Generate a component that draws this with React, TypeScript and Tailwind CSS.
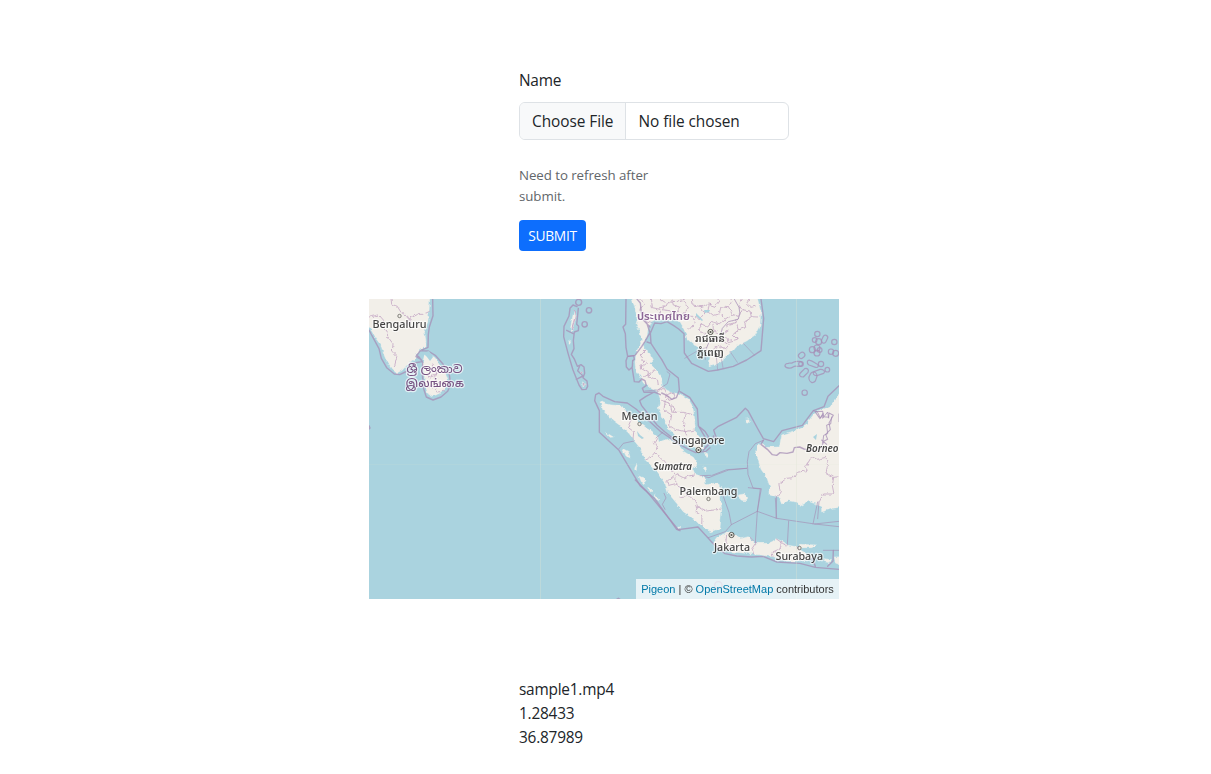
import React from "react";

const LAND = "#f2efe9";
const BORDER = "#a58db5";

type LabelProps = {
  x: number;
  y: number;
  width: number;
  children: string;
  size?: number;
  fill?: string;
  italic?: boolean;
  weight?: number;
};

function Label({ x, y, width, children, size = 11, fill = "#444444", italic, weight = 500 }: LabelProps) {
  return (
    <text
      x={x}
      y={y}
      textLength={width}
      lengthAdjust="spacingAndGlyphs"
      fontSize={size}
      fontWeight={weight}
      fontStyle={italic ? "italic" : "normal"}
      fill={fill}
      stroke="#ffffff"
      strokeOpacity={0.65}
      strokeWidth={2.4}
      strokeLinejoin="round"
      paintOrder="stroke"
    >
      {children}
    </text>
  );
}

function Town({ x, y, capital }: { x: number; y: number; capital?: boolean }) {
  return (
    <g>
      <circle cx={x} cy={y} r={capital ? 2.6 : 1.7} fill="#f2efe9" stroke="#55554f" strokeWidth={capital ? 1 : 0.7} />
      {capital && <circle cx={x} cy={y} r={1.1} fill="#55554f" />}
    </g>
  );
}

function MapDrawing() {
  return (
    <svg
      className="block h-[300px] w-[470px]"
      viewBox="369 299 470 300"
      fontFamily="'Noto Sans', 'Noto Sans Thai', 'Noto Sans Khmer', 'Noto Sans Sinhala', 'Noto Sans Tamil', sans-serif"
    >
      <defs>
        <filter id="coast" x="369" y="299" width="470" height="300" filterUnits="userSpaceOnUse" colorInterpolationFilters="sRGB">
          <feTurbulence type="fractalNoise" baseFrequency="0.22" numOctaves="2" seed="4" result="n" />
          <feDisplacementMap in="SourceGraphic" in2="n" scale="4" xChannelSelector="R" yChannelSelector="G" />
        </filter>
      </defs>
      <rect x="369" y="299" width="470" height="300" fill="#aad3df" />

      <g filter="url(#coast)" fill={LAND} stroke="#c6e1e7" strokeWidth="3" strokeLinejoin="round" paintOrder="stroke">
        {/* India and Sri Lanka */}
        <g transform="translate(365 295) scale(.33333)">
          <path d="M0 0H195L192 50L188 85L178 110L183 138L180 155L158 172L150 190L128 208L112 226L95 234L80 222L66 200L55 175L48 150L32 130L20 108L0 85Z" />
          <path d="M178 183L192 177L210 188L222 208L240 232L250 260L243 280L225 296L203 303L188 295L180 270L177 232L172 205Z" />
        </g>
        {/* Andaman and Nicobar, mainland */}
        <g transform="translate(525 295) scale(.33333)">
          <path d="M148 45L153 65L146 90L139 112L137 94L143 65ZM130 137L137 140L134 148L129 145ZM166 228L173 234L168 241ZM173 260L180 269L174 276Z" />
          <path d="M318 0L330 40L337 70L333 90L345 110L350 140L337 165L330 200L332 225L346 245L356 262L378 278L398 290L406 312L400 340L410 365L425 392L450 420L485 450L515 462L535 462L530 435L512 412L508 365L503 335L490 312L465 297L440 292L425 285L412 272L409 250L394 226L374 205L385 194L374 175L362 165L354 150L366 125L370 98L378 80L400 72L430 74L452 72L466 85L478 105L487 132L507 150L535 163L556 176L552 215L572 209L597 192L617 172L635 152L665 138L690 120L705 90L707 50L695 0Z" />
        </g>
        {/* Sumatra */}
        <g transform="translate(560 380) scale(.33333)">
          <path d="M120 65L148 74L180 77L202 93L220 113L240 130L268 150L293 170L297 186L320 178L350 190L372 215L400 232L412 250L400 270L405 283L434 290L437 315L470 308L485 320L482 350L485 390L480 445L452 455L425 440L400 415L370 395L350 370L325 340L315 310L300 290L282 265L256 240L245 210L225 185L207 160L185 140L158 120L130 93Z" />
          <path d="M137 157L160 171L150 172ZM187 205L205 215L211 234L198 228ZM237 288L252 295L258 312L244 305ZM266 324L277 333L271 336ZM284 343L298 362L289 358ZM232 250L228 273L224 265ZM432 215L444 222L438 230ZM535 345L552 342L563 352L557 362L543 360ZM555 118L567 116L568 130L558 127ZM430 265L438 258L440 275Z" />
        </g>
        {/* Borneo */}
        <g transform="translate(700 380) scale(.33333)">
          <path d="M172 194L188 187L195 202L238 201L245 165L290 150L314 138L342 102L370 88L395 76L435 20V378L400 385L365 396L365 382L350 373L325 364L300 379L288 366L265 362L245 372L238 355L210 345L210 320L200 292L183 268L176 245L167 215Z" />
        </g>
        {/* Java and islands to its east */}
        <g transform="translate(630 480) scale(.33333)">
          <path d="M248 192L267 168L290 158L310 158L332 176L355 170L370 190L420 190L438 176L460 185L475 196L500 200L525 215L545 229L535 241L500 243L470 243L430 230L370 222L310 216L268 208ZM508 193L560 195L545 203L510 203ZM582 236L605 239L596 254ZM612 231L640 230V258L616 249ZM145 137L153 140L148 143Z" />
        </g>
      </g>

      <g filter="url(#coast)" fill="none" stroke="#c5a9c6" strokeWidth="2.8" strokeLinejoin="round" strokeOpacity=".9">
        <g transform="translate(365 295) scale(.33333)">
          <path d="M78 10L80 28L97 34L108 52L128 64L133 75L130 90M133 71L158 58L175 58L194 49M12 66L42 60L56 76L50 94L66 108L68 125L84 146L82 170L96 185L88 216" />
          <path d="M205 204L198 224L216 232L207 250L222 264L242 266M187 280L203 272L218 291L241 288M182 239L197 246L211 240L220 216" />
        </g>
        <g transform="translate(525 295) scale(.33333)">
          <path d="M148 45L151 65L145 85L139 105M168 230L171 238M175 264L177 272" strokeWidth="4" />
          <path d="M360 165L344 181L360 201L344 215L370 230L368 246L397 252L400 270M345 220L365 205M370 245L388 226M356 247L378 233" />
          <path d="M344 12L358 28L344 43L365 60L356 75L379 82M379 12L382 38L405 43L401 64M405 12L425 25L412 44L440 48L438 67M440 12L445 30L467 36L453 55L472 66M401 39L420 35L435 18L455 20L480 12" />
          <path d="M473 12L490 38L475 59L500 64L510 83L493 103M502 12L504 30L528 35L540 54L525 70L510 68M528 35L549 27L570 34L582 17L573 5M553 28L548 50L565 64L585 58L601 72L583 86L561 80L548 96L532 88L520 104L540 116L530 133M601 72L622 58L640 64L633 82L605 90L609 106L590 119L565 107L564 86M640 64L651 44L675 48L679 65L699 66M651 44L640 28L649 12M679 65L658 78L662 97L640 105L633 82M640 105L623 119L637 133L610 140L602 126L580 138L569 124M595 135L614 150L602 164L583 151L565 162M674 12L665 25L677 37L695 33M582 58L588 36L610 38L621 18L613 4M610 38L622 58" />
          <path d="M395 291L418 280L427 299L446 291L451 310L432 316L423 300M409 316L435 325L450 342L443 352L477 352L507 360M423 299L417 345L440 360L434 392L450 403L480 410L510 405M441 353L436 325M480 355L475 397L485 421" />
        </g>
        <g transform="translate(560 380) scale(.33333)">
          <path d="M202 93L213 119L204 142L221 155L219 181M293 170L283 188L293 207L274 230L258 238M284 218L309 241L320 254L343 280L370 293L404 284M343 286L321 304L326 316L347 311L367 326L382 346L405 360L413 380L440 393L485 387M348 290L347 311M382 346L359 351M413 380L408 397L426 407L425 440" />
        </g>
        <g transform="translate(700 380) scale(.33333)">
          <path d="M335 230L317 260L325 271L291 277L281 293L259 295L236 314L241 335L230 352M335 230L351 238L378 232L383 256L378 279L401 292L397 317L402 342L368 342L357 365M401 292L418 290" />
        </g>
        <g transform="translate(630 480) scale(.33333)">
          <path d="M290 162L288 185L299 205L299 216M360 171L377 189L366 206L371 222M438 176L454 187L446 208L426 217L429 230M454 187L470 198M501 199L508 215" />
        </g>
      </g>

      <g fill="none" stroke={BORDER} strokeWidth="4.2" strokeLinejoin="round" strokeLinecap="round" strokeOpacity=".75">
        {/* Maritime limits around India and Sri Lanka */}
        <g transform="translate(365 295) scale(.33333)">
          <path d="M203 12L204 62L193 96L190 118L189 157L175 163L166 167L153 185L168 193L172 200L146 204L139 218L121 231L104 239L88 237L65 218L49 190L42 161L27 133L12 105M166 167L190 168L212 182L234 207L253 239L257 269L248 289L228 306L204 315L184 306L176 281L172 237L173 202L162 186L155 180M12 392L15 399L12 402" />
        </g>
        {/* Island chain and west coast of the peninsula */}
        <g transform="translate(525 295) scale(.33333)">
          <path d="M156 35L144 30L135 40L132 63L117 94L116 125L122 148L130 178L144 225L162 270L171 284L183 283L188 274L186 258L174 248L179 235L177 216L168 209L157 214L148 192L139 178L147 161L145 137L148 111L160 107L161 94L155 88L158 60L160 40M145 116L125 106M164 213L158 227L174 243L154 253" />
          <circle cx="161" cy="22" r="9" />
          <circle cx="192" cy="46" r="8" />
          <circle cx="179" cy="88" r="8" />
          <path d="M303 12L302 88L294 96L301 116L303 157L308 184L303 197L304 216L312 225L322 216L323 197L328 193L326 182L309 184M321 216L328 260L342 261L350 252L360 257L364 271L352 280L357 292L388 291L363 304L344 317L350 332L396 390L420 411L460 443M388 291L406 299" />
          <path d="M336 12L346 24L350 60L366 86L375 113L360 139L350 155L330 181L310 184M355 75L375 96M366 141L378 145L392 167L410 193L426 222L460 249L463 285L454 308L440 313L427 302L410 294M378 145L376 115L389 84L408 86L426 80L445 91L461 102L477 116L478 174L500 205L550 229L578 225L625 214L665 195L708 167L716 70L708 12" />
          <path d="M426 230L435 237L427 266L398 285L360 288" strokeWidth="2.4" />
          <path d="M479 190L527 162L545 158L541 194M587 180L594 218M615 169L637 202M655 145L689 181M573 176L578 225" strokeWidth="2" />
          <path d="M628 12L642 37L645 57L639 73L610 80L592 100L586 122L573 132L553 139L545 158" strokeWidth="3" />
        </g>
        {/* Spratly and eastern limits */}
        <g transform="translate(680 295) scale(.33333)" strokeWidth="3.6">
          <circle cx="412" cy="117" r="8" />
          <circle cx="404" cy="135" r="7" />
          <circle cx="416" cy="140" r="9" />
          <rect x="427" y="120" width="14" height="25" rx="7" transform="rotate(25 434 132)" />
          <circle cx="463" cy="141" r="8" />
          <circle cx="397" cy="164" r="9" />
          <circle cx="411" cy="159" r="9" />
          <circle cx="411" cy="174" r="9" />
          <circle cx="419" cy="165" r="7" />
          <circle cx="453" cy="170" r="8" />
          <circle cx="467" cy="175" r="9" />
          <rect x="355" y="173" width="20" height="16" rx="8" transform="rotate(-40 365 181)" />
          <path d="M325 205C332 202 334 207 340 202C350 197 354 200 360 199C370 201 370 214 359 214C350 215 346 211 339 216C333 221 326 220 320 218C311 213 315 205 325 205Z" />
          <circle cx="363" cy="207" r="7" />
          <path d="M390 196C399 198 404 204 411 207C419 213 413 219 407 217L387 210C378 204 382 194 390 196Z" />
          <circle cx="423" cy="207" r="8" />
          <path d="M361 234L374 221C382 218 388 225 384 232L370 246C359 246 356 240 361 234Z" />
          <path d="M394 233C403 227 411 233 411 244L406 258C398 267 389 262 387 252C385 244 389 241 394 233Z" />
          <path d="M402 230L420 223C428 222 438 228 431 235L411 242C400 243 397 234 402 230Z" />
          <circle cx="442" cy="224" r="7" />
          <circle cx="374" cy="293" r="8" />
          <path d="M0 290L29 307L52 342L55 392L74 424L77 438M108 426L101 405L113 395L170 367L196 340L204 347L232 399L250 431L281 440L306 407L367 391L400 347L432 335L444 304L477 272" strokeWidth="4.2" />
          <path d="M400 347L412 350L421 369L429 355L428 370L443 351L446 369M455 366L452 387L440 390L443 416L431 421L428 444" strokeWidth="3" />
          <path d="M477 357V380" strokeWidth="3" />
        </g>
        <g transform="translate(560 380) scale(.33333)">
          <path d="M107 44L117 39L129 49L164 65L202 69L228 87L260 116L301 154L326 171L356 192L386 208L407 218L438 214L450 203M107 44L104 62L118 92L118 157L177 211L240 317L285 357L350 448L360 452" />
          <path d="M177 206L190 190L222 183M288 174L309 156M315 388L307 373L318 354L312 340M434 290L447 293L466 285L506 270L560 265" strokeWidth="2.6" />
        </g>
        <g transform="translate(700 380) scale(.33333)">
          <path d="M0 142L15 154L25 170L27 193L10 211M27 193L16 202M40 168L47 179M190 181L183 193L202 208L217 224L230 226L240 218L261 220L279 216L283 203L299 201L312 207L338 212" />
          <path d="M190 181L166 191L147 215L142 245L144 283L159 324L184 326L172 394M140 265L80 269L36 286M230 350L228 414M357 365L353 416M0 287L33 286" strokeWidth="2.6" />
          <path d="M352 216L365 201L371 184L383 178L377 163L391 149L387 129L400 106L387 99L386 112L371 110L368 94L345 95L360 116L367 106M365 180L380 193" strokeWidth="3.2" />
        </g>
        <g transform="translate(630 480) scale(.33333)">
          <path d="M16 0L50 34L145 149L204 141L250 191L285 221L320 228L365 231L399 229L441 246L510 250L556 262L627 268M547 235L556 259M593 259L609 243L610 211" />
          <path d="M235 173L286 155L304 134L382 94L391 27L355 23M275 35L297 97L304 134M382 94L376 188M382 94L440 115L554 132L627 124M440 115L436 55M476 123L472 195M549 132L563 66M554 132L627 140M580 211H627" strokeWidth="2.6" />
          <circle cx="265" cy="316" r="11" />
          <path d="M-40 358L-35 355L-30 358" />
        </g>
      </g>

      <g fill="#aad3df">
        <path d="M637 431L640 435L644 438L642 439L638 436ZM696 313L703 320L702 321L696 316ZM704 310L710 310L709 312L705 313ZM813 437L817 434L816 440ZM423 353L429 351L433 357L430 361L427 357Z" />
      </g>
      <g fill="#dfe5d4">
        <rect x="540" y="299" width="1" height="300" fillOpacity=".35" />
        <rect x="796" y="299" width="1" height="300" fillOpacity=".35" />
        <rect x="369" y="464" width="470" height="1" fillOpacity=".12" />
      </g>

      <Town x={399.5} y={316} />
      <Town x={639.5} y={424} />
      <Town x={708.5} y={499} />
      <Town x={799.5} y={548} />
      <Town x={710.5} y={332} capital />
      <Town x={698.5} y={450} capital />
      <Town x={731.5} y={535} capital />

      <Label x={372.5} y={328.4} width={54}>Bengaluru</Label>
      <Label x={621.5} y={420} width={36}>Medan</Label>
      <Label x={672} y={444} width={52.5}>Singapore</Label>
      <Label x={653.5} y={470.4} width={38.5} size={10} italic weight={600}>Sumatra</Label>
      <Label x={679.5} y={495} width={58}>Palembang</Label>
      <Label x={714} y={551} width={36}>Jakarta</Label>
      <Label x={775.5} y={559.8} width={47.5}>Surabaya</Label>
      <Label x={806} y={452} width={32.5} size={10} italic weight={600}>Borneo</Label>
      <Label x={637} y={320} width={53} fill="#8b6695" weight={600}>ประเทศไทย</Label>
      <Label x={695} y={341.8} width={30} size={10} weight={600}>រាជធានី</Label>
      <Label x={697} y={355.6} width={27} size={10} weight={600}>ភ្នំពេញ</Label>
      <Label x={406.5} y={373.4} width={56} fill="#765282">ශ්‍රී ලංකාව</Label>
      <Label x={405.5} y={386.6} width={58.5} fill="#765282">இலங்கை</Label>
    </svg>
  );
}

export default function App() {
  return (
    <main className="h-[774px] w-full overflow-hidden bg-white pt-[69px] font-['Open_Sans','Noto_Sans',sans-serif] text-[15.4px] leading-6 text-[#212529]">
      <div className="ml-[369px] flex w-[470px] flex-col">
        <form className="ml-[150px] flex w-[270px] flex-col items-start" onSubmit={(e) => e.preventDefault()}>
          <label htmlFor="file" className="mb-[9px] tracking-[-0.25px]">Name</label>
          <label className="flex h-[38px] w-full cursor-pointer overflow-hidden rounded-md border border-[#dee2e6]">
            <span className="flex w-[106px] shrink-0 items-center whitespace-nowrap border-r border-[#dee2e6] bg-[#f8f9fa] pt-0.5 pl-3 tracking-[-0.05px]">
              Choose File
            </span>
            <span className="flex items-center whitespace-nowrap pt-0.5 pl-[12.5px] tracking-[-0.05px]">No file chosen</span>
            <input id="file" type="file" className="hidden" />
          </label>
          <p className="mt-[25px] w-[150px] text-[13.3px] leading-[21px] tracking-[-0.06px] text-[#62666a]">
            Need to refresh after submit.
          </p>
          <button
            type="submit"
            className="mt-[13px] h-[31px] w-[67px] rounded bg-[#0d6efd] pb-px text-center text-[13.8px] leading-[21px] tracking-[-0.3px] text-white"
          >
            SUBMIT
          </button>
        </form>

        <div className="relative mt-12 h-[300px] w-[470px] overflow-hidden">
          <MapDrawing />
          <div className="absolute right-0 bottom-0 flex h-5 w-[203px] items-center justify-center whitespace-pre bg-white/70 font-['Liberation_Sans',Arial,sans-serif] text-[11px] leading-none text-[#333333]">
            <a className="text-[#0078a8]">Pigeon</a> | © <a className="text-[#0078a8]">OpenStreetMap</a> contributors
          </div>
        </div>

        <div className="mt-[79px] ml-[150px] flex flex-col tracking-[-0.22px]">
          <span>sample1.mp4</span>
          <span>1.28433</span>
          <span>36.87989</span>
        </div>
      </div>
    </main>
  );
}
